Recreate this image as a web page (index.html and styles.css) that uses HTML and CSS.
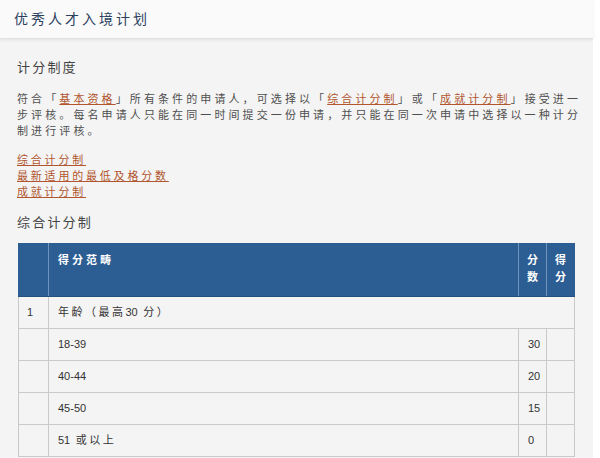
FILE: index.html
```html
<!DOCTYPE html>
<html lang="zh-CN">
<head>
<meta charset="utf-8">
<title>优秀人才入境计划</title>
<link rel="stylesheet" href="styles.css">
</head>
<body>
<div class="page">
  <header class="topbar">
    <h1 class="title">优秀人才入境计划</h1>
  </header>
  <main class="panel">
    <h2 class="section-title">计分制度</h2>
    <p class="intro">符合「<a href="#">基本资格</a>」所有条件的申请人，可选择以「<a href="#">综合计分制</a>」或「<a href="#">成就计分制</a>」接受进一<br>步评核。每名申请人只能在同一时间提交一份申请，并只能在同一次申请中选择以一种计分<br>制进行评核。</p>
    <ul class="links">
      <li><a href="#">综合计分制</a></li>
      <li><a href="#">最新适用的最低及格分数</a></li>
      <li><a href="#">成就计分制</a></li>
    </ul>
    <h2 class="section-title">综合计分制</h2>
    <table class="score">
      <colgroup>
        <col class="c-no">
        <col class="c-item">
        <col class="c-pts">
        <col class="c-got">
      </colgroup>
      <thead>
        <tr>
          <th></th>
          <th>得分范畴</th>
          <th class="narrow">分数</th>
          <th class="narrow">得分</th>
        </tr>
      </thead>
      <tbody>
        <tr class="group">
          <td class="num">1</td>
          <td colspan="3">年龄（最高<span class="digits">30</span> 分）</td>
        </tr>
        <tr><td></td><td class="num">18-39</td><td class="num">30</td><td></td></tr>
        <tr><td></td><td class="num">40-44</td><td class="num">20</td><td></td></tr>
        <tr><td></td><td class="num">45-50</td><td class="num">15</td><td></td></tr>
        <tr><td></td><td><span class="digits">51</span> 或以上</td><td class="num">0</td><td></td></tr>
      </tbody>
    </table>
  </main>
</div>
</body>
</html>
```

FILE: styles.css
```css
html, body {
  margin: 0;
  padding: 0;
  overflow: hidden;
  background: #ffffff;
}

body {
  font-family: "Liberation Sans", "Noto Sans CJK SC", sans-serif;
  color: #4a4a4a;
}

.page {
  width: 593px;
  height: 458px;
  background: #f4f4f4;
}

.topbar {
  height: 38px;
  background: #fafafa;
  border-bottom: 1px solid #e2e2e2;
  box-shadow: 0 1px 3px rgba(0, 0, 0, 0.08);
  display: flex;
  align-items: center;
  padding-left: 14px;
}

.title {
  margin: 0;
  font-size: 14px;
  font-weight: normal;
  letter-spacing: 3px;
  color: #2b3f5e;
  line-height: 18px;
}

.panel {
  padding: 20px 10px 0 17px;
}

.section-title {
  margin: 0;
  font-size: 13px;
  font-weight: normal;
  letter-spacing: 2.2px;
  line-height: 18px;
  color: #444444;
}

.intro {
  margin: 14px 0 13px;
  font-size: 11px;
  line-height: 16px;
  letter-spacing: 3.1px;
  color: #4f4f4f;
  white-space: nowrap;
}

a {
  color: #b1562f;
  text-decoration: underline;
}

.links {
  list-style: none;
  margin: 0 0 14px;
  padding: 0;
  font-size: 11px;
  line-height: 16px;
  letter-spacing: 2.8px;
}

.score {
  margin-top: 11px;
  margin-left: 1px;
  width: 557px;
  border-collapse: collapse;
  table-layout: fixed;
  font-size: 11px;
  color: #333333;
}

.c-no { width: 30px; }
.c-pts { width: 28px; }
.c-got { width: 28px; }

.score th {
  background: #2c5d93;
  color: #ffffff;
  font-weight: bold;
  text-align: left;
  vertical-align: top;
  letter-spacing: 3px;
  line-height: 17px;
  padding: 9px 8px 10px 9px;
  border-left: 1px solid #6f93bc;
  border-bottom: 1px solid #24507f;
}

.score th:first-child {
  border-left: 1px solid #2c5d93;
}

.score th.narrow {
  padding: 9px 4px 10px 8px;
  letter-spacing: 0;
}

.score td {
  border: 1px solid #c9c9c9;
  padding: 7px 8px 7px 9px;
  line-height: 17px;
  letter-spacing: 2.5px;
  background: #f4f4f4;
}

.score td.num,
.score .digits {
  letter-spacing: 0;
}

.score tr.group td:first-child {
  padding-left: 8px;
}
```
